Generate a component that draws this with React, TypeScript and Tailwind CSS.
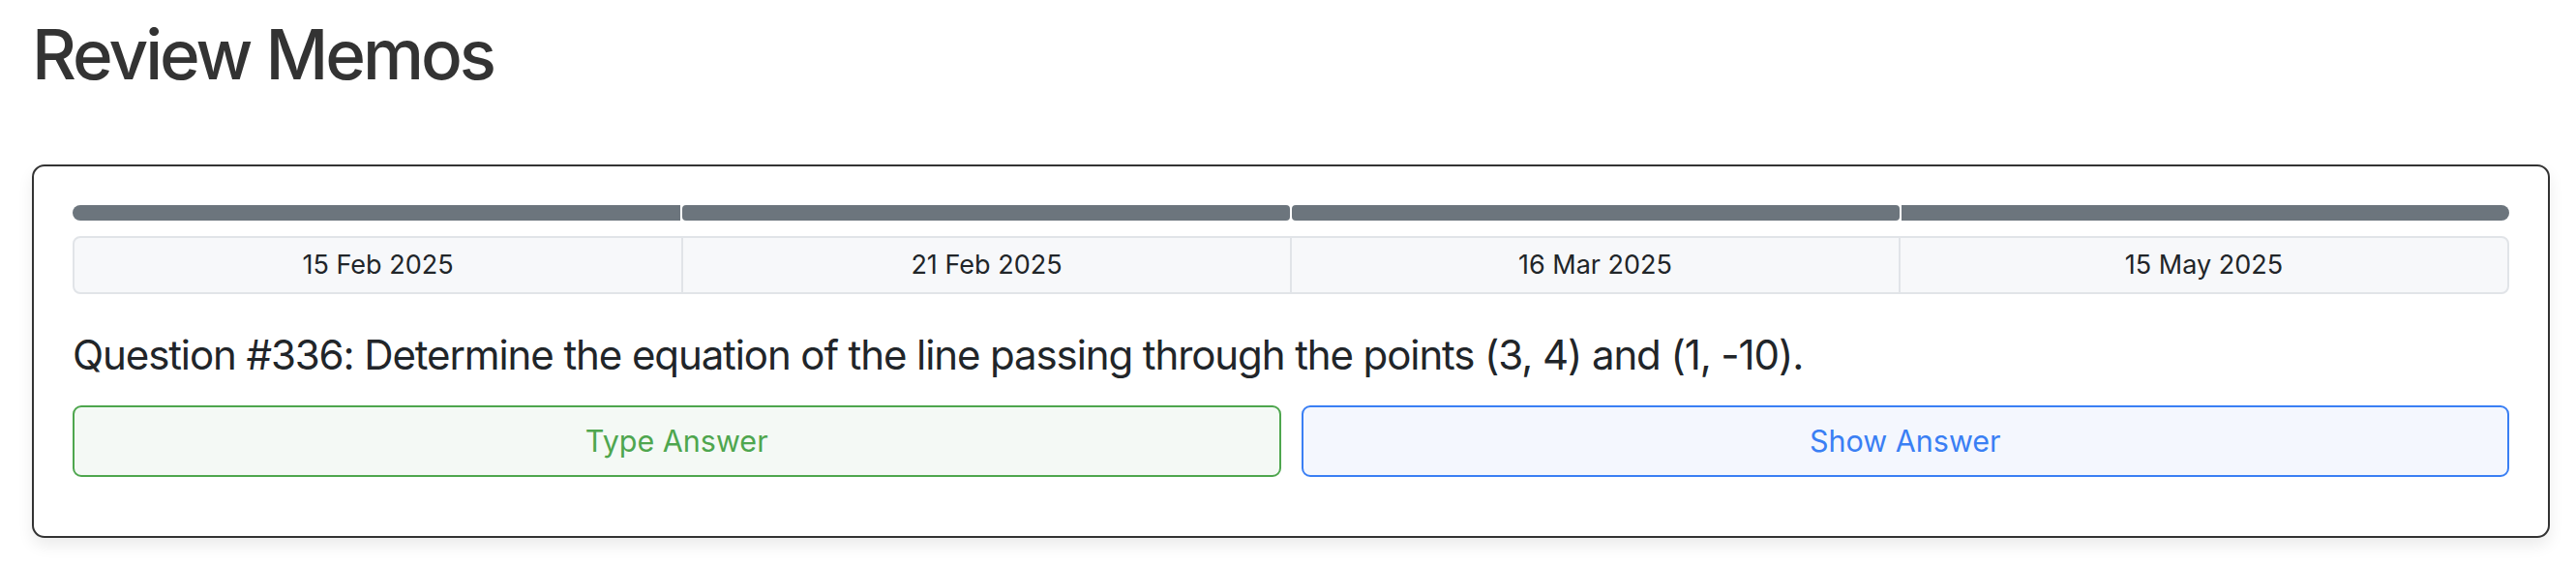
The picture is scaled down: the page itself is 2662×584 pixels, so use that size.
export default function App() {
  const dates = ["15 Feb 2025", "21 Feb 2025", "16 Mar 2025", "15 May 2025"];
  return (
    <div className="min-h-screen bg-white pl-[33px] pr-[27px] pt-[13px] font-['Inter',sans-serif]">
      <h1 className="text-[71px] leading-[86px] font-medium text-[#333333] tracking-[-3px]">Review Memos</h1>
      <div className="mt-[71px] rounded-[13px] border-2 border-[#333333] bg-white px-[40px] pt-[40px] pb-[61px] shadow-[0_8px_16px_rgba(0,0,0,0.08)]">
        <div className="flex h-[16px] gap-[2px]">
          {dates.map((d, i) => (
            <div
              key={d}
              className={
                i === 0
                  ? "flex-1 bg-[#6c757d] rounded-l-full rounded-r-[4px]"
                  : i === 3
                  ? "flex-1 bg-[#6c757d] rounded-r-full rounded-l-[4px]"
                  : "flex-1 bg-[#6c757d] rounded-[4px]"
              }
            />
          ))}
        </div>
        <div className="mt-[16px] flex h-[60px] rounded-[8px] border-2 border-[#e1e4e8] bg-[#f7f8fa]">
          {dates.map((d, i) => (
            <div
              key={d}
              className={
                i === 0
                  ? "flex flex-1 items-center justify-center text-[27px] text-[#212529]"
                  : "flex flex-1 items-center justify-center border-l-2 border-[#e1e4e8] text-[27px] text-[#212529]"
              }
            >
              {d}
            </div>
          ))}
        </div>
        <p className="mt-[37px] text-[42px] leading-[52px] text-[#212529] tracking-[-1.1px]">
          Question #336: Determine the equation of the line passing through the points (3, 4) and (1, -10).
        </p>
        <div className="mt-[26px] flex gap-[21px]">
          <button className="flex h-[74px] flex-1 items-center justify-center rounded-[9px] border-2 border-[#4ea64e] bg-[#f4f9f5] text-[30.5px] text-[#4ea64e]">
            Type Answer
          </button>
          <button className="flex h-[74px] flex-1 items-center justify-center rounded-[9px] border-2 border-[#3a7ff4] bg-[#f4f7fe] text-[30.5px] text-[#3a7ff4]">
            Show Answer
          </button>
        </div>
      </div>
    </div>
  );
}
